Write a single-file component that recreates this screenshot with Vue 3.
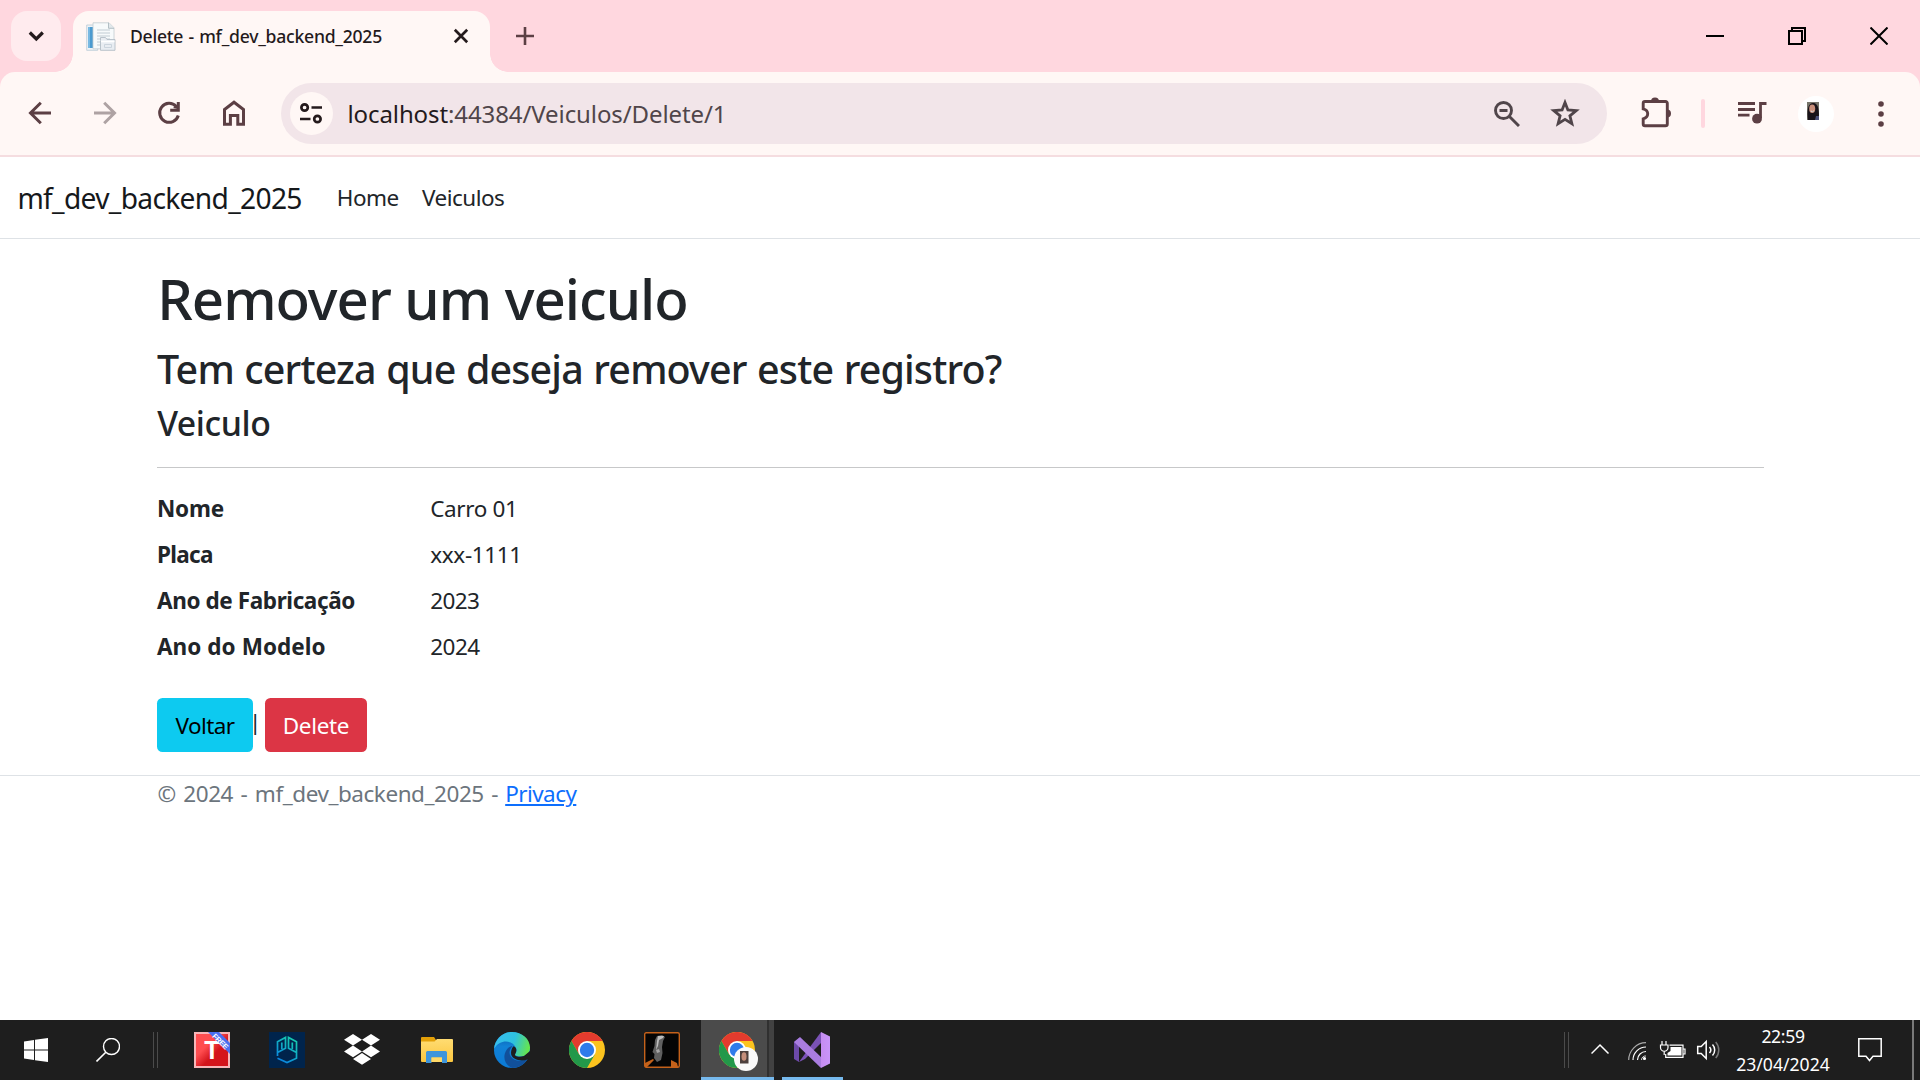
<script setup>
const rows = [
  { label: 'Nome', value: 'Carro 01', ls: -0.2, vs: -0.35 },
  { label: 'Placa', value: 'xxx-1111', ls: -0.7, vs: -0.34 },
  { label: 'Ano de Fabricação', value: '2023', ls: -0.4, vs: -0.6 },
  { label: 'Ano do Modelo', value: '2024', ls: 0.06, vs: -0.5 },
]
</script>

<template>
  <div class="screen">
    <header class="tabstrip">
      <button class="tab-search">
        <svg width="50" height="50" viewBox="11 11 50 50"><path d="M29.8 32.5l6.5 6.5 6.5-6.5" fill="none" stroke="#241a1c" stroke-width="3.2" /></svg>
      </button>
      <div class="tab">
        <svg class="favicon" width="30" height="30" viewBox="0 0 30 30">
          <path d="M.7 3h11v25.300h-11z" fill="#eef3f7" stroke="#b9c9d4" stroke-width=".8" />
          <path d="M2 5h5v21H2z" fill="#4b9bd0" /><path d="M2 5h2v21H2z" fill="#78b9e2" />
          <path d="M7 .8h16l5 5v21H7z" fill="#f7fafb" stroke="#c2cbd0" stroke-width=".8" />
          <path d="M22.500 .8v5.500H28" fill="#e2e8eb" stroke="#a5b2b9" stroke-width=".8" />
          <path d="M11 8h13M11 11h13M11 14h13M11 17h13M11 20h8M11 23h8" stroke="#d4dce1" stroke-width="1.400" />
          <path d="M14.500 18.500v-3h5l1.500 2h8v10.800H14.500z" fill="#e9edf2" stroke="#b3bdc6" stroke-width=".9" />
          <path d="M15 19.500h13.500" stroke="#fff" stroke-width="1.600" /><path d="M18.500 22.500h7v3h-7z" fill="none" stroke="#cbd4dd" />
        </svg>
        <span class="tab-title">Delete - mf_dev_backend_2025</span>
        <svg class="tab-close" width="16" height="16" viewBox="0 0 16 16"><path d="M1.800 1.800l12.400 12.400M14.200 1.800L1.800 14.200" stroke="#241a1c" stroke-width="2.700" /></svg>
      </div>
      <svg class="plus" width="18" height="18" viewBox="0 0 18 18"><path d="M9 0v18M0 9h18" stroke="#5c3f44" stroke-width="2.600" /></svg>
      <div class="win-buttons">
        <svg width="18" height="18" viewBox="0 0 18 18"><path d="M0 9h18" stroke="#000" stroke-width="2" /></svg>
        <svg width="18" height="18" viewBox="0 0 18 18"><path d="M1 4h13v13H1zM4 4V1h13v13h-3" fill="none" stroke="#000" stroke-width="2" /></svg>
        <svg width="18" height="18" viewBox="0 0 18 18"><path d="M.5 .5l17 17M17.500 .5l-17 17" stroke="#000" stroke-width="2" /></svg>
      </div>
    </header>

    <div class="toolbar-wrap">
      <div class="toolbar">
        <div class="nav-icons">
          <svg width="24" height="24" viewBox="0 0 24 24"><path d="M23 12H3M12.800 1.700L2.500 12l10.300 10.300" /></svg>
          <svg class="dim" width="24" height="24" viewBox="0 0 24 24"><path d="M1 12h20M11.200 1.700L21.500 12 11.200 22.300" /></svg>
          <svg width="24" height="24" viewBox="0 0 24 24"><path d="M19.200 5.400A9.500 9.500 0 1 0 21.300 14.500M21.300 1v8.300H13.200" /><path d="M16 7l5-4v5z" fill="#5c3f44" stroke="none" /></svg>
          <svg width="24" height="28" viewBox="0 0 24 28"><path d="M2.500 25.300V10.500L12 3.200l9.500 7.300v14.800h-5.700V16.500H8.400v8.800z" /></svg>
        </div>
        <div class="omnibox">
          <span class="site-info">
            <svg width="22" height="22" viewBox="0 0 22 22"><path d="M11.500 5.500H22M0 17h10.500" /><circle cx="4.600" cy="5.500" r="3.200" /><circle cx="17.400" cy="17" r="3.200" /></svg>
          </span>
          <span class="url"><b>localhost</b>:44384/Veiculos/Delete/1</span>
          <svg class="zoom-out" width="26" height="26" viewBox="0 0 26 26"><circle cx="9.500" cy="9.500" r="8" /><path d="M15.200 15.200L25 25M5.500 9.500h8" /></svg>
          <svg class="star" width="30" height="28" viewBox="0 0 30 28"><path d="M15 3.500l2.900 7.500 8.300.6-6.300 5.200 2 7.900-6.900-4.300-6.900 4.300 2-7.900-6.300-5.200 8.300-.6z" /></svg>
        </div>
        <svg class="ext" width="30" height="32" viewBox="0 0 30 32">
          <path d="M4 5.500h20.500a1.800 1.800 0 0 1 1.800 1.800V28a1.800 1.800 0 0 1-1.800 1.800H4A1.800 1.800 0 0 1 2.200 28v-5.200c3-.8 4.500-2.600 4.500-5s-1.500-4.200-4.500-5V7.300A1.800 1.800 0 0 1 4 5.500z" fill="none" stroke="#5c3f44" stroke-width="2.900" />
          <path d="M10 5.500a4 4 0 0 1 8 0zM26 13.500a4 4 0 0 1 0 8z" fill="#5c3f44" />
        </svg>
        <i class="divider"></i>
        <svg class="media" width="29" height="22" viewBox="0 0 29 22"><path d="M0 1.500h17M0 7.500h17M0 13.200h11.500M22.500 16V1.500H28.500" fill="none" stroke="#5c3f44" stroke-width="2.800" /><circle cx="19" cy="16.700" r="4.900" fill="#5c3f44" /></svg>
        <span class="avatar">
          <svg width="12" height="18" viewBox="0 0 12 18"><path d="M0 0h12v18H0z" fill="#77746a" /><path d="M1 18C0 11 0 1 6 1S12 9 12 18z" fill="#191319" /><ellipse cx="5.200" cy="6.800" rx="3" ry="4.300" fill="#c98f7b" /><path d="M3.800 9q1.500 1.300 3 0" stroke="#fff" stroke-width=".9" /><path d="M9 14h3v4H8z" fill="#4c5079" /></svg>
        </span>
        <svg class="dots" width="6" height="28" viewBox="0 0 6 28"><circle cx="3" cy="4" r="2.800" /><circle cx="3" cy="14" r="2.800" /><circle cx="3" cy="24" r="2.800" /></svg>
      </div>
    </div>

    <div class="page">
      <nav class="navbar">
        <a class="brand">mf_dev_backend_2025</a>
        <a class="home">Home</a>
        <a class="veic">Veiculos</a>
      </nav>
      <main>
        <h1>Remover um veiculo</h1>
        <h3>Tem certeza que deseja remover este registro?</h3>
        <h4>Veiculo</h4>
        <hr />
        <dl>
          <div v-for="r in rows" :key="r.label" class="row">
            <dt :style="{ letterSpacing: r.ls + 'px' }">{{ r.label }}</dt>
            <dd :style="{ letterSpacing: r.vs + 'px' }">{{ r.value }}</dd>
          </div>
        </dl>
        <div class="actions">
          <a class="btn info">Voltar</a><span class="pipe">|</span><button class="btn danger">Delete</button>
        </div>
      </main>
      <footer><span>© 2024 - mf_dev_backend_2025 -</span><a>Privacy</a></footer>
    </div>

    <div class="taskbar">
      <svg class="start" width="24" height="24" viewBox="0 0 24 24"><path d="M0 3.400L10 2v9.400H0zM11 1.800L24 0v11.400H11zM0 12.500h10V22L0 20.600zM11 12.500h13V24l-13-1.800z" fill="#fff" /></svg>
      <svg class="search" width="24" height="24" viewBox="0 0 24 24"><circle cx="15.500" cy="8.500" r="8" fill="none" stroke="#fff" stroke-width="1.400" /><path d="M9.800 14.200L.5 23.500" stroke="#fff" stroke-width="1.600" /></svg>
      <i class="grip g1"></i>
      <div class="apps">
        <div class="app">
          <svg width="36" height="36" viewBox="0 0 36 36">
            <defs><linearGradient id="tr" x2="1" y2="1"><stop offset=".35" stop-color="#ff4d50" /><stop offset=".6" stop-color="#d4141b" /></linearGradient><clipPath id="tc"><path d="M0 0h36v36H0z" /></clipPath></defs>
            <g clip-path="url(#tc)"><path d="M0 0h36v36H0z" fill="#f7b6b8" /><path d="M2 2h32v32H2z" fill="url(#tr)" />
              <text x="18" y="27" text-anchor="middle" font-family="Liberation Sans, sans-serif" font-weight="700" font-size="25" fill="#fff">T</text>
              <path d="M14 0h11l11 11v11z" fill="#4a6ff0" />
              <text transform="translate(18.500 4) rotate(45)" font-family="Liberation Sans, sans-serif" font-weight="700" font-size="7.500" fill="#fff" textLength="19" y="1">FREE</text></g>
          </svg>
        </div>
        <div class="app">
          <svg width="36" height="36" viewBox="0 0 36 36">
            <defs><linearGradient id="pg" x1="0" y1="1" x2=".6" y2="0"><stop offset="0" stop-color="#087be8" /><stop offset="1" stop-color="#16c8b0" /></linearGradient></defs>
            <path d="M0 0h36v36H0z" fill="#00244c" />
            <path d="M8.500 24V9.800L16.500 5.500V16.300L8.500 20.500M12.800 10.500v6.500M23.300 10.500v6.500M27.500 20.500L19.500 16.300V5.500l8 4.300v16.500L18 30.600l-9.500-4.300" fill="none" stroke="url(#pg)" stroke-width="1.700" />
          </svg>
        </div>
        <div class="app">
          <svg width="36" height="36" viewBox="0 0 36 36"><path d="M9 2l9 5.800-9 5.800-9-5.800zM27 2l9 5.800-9 5.800-9-5.800zM9 13.600l9 5.800-9 5.800-9-5.800zM27 13.600l9 5.800-9 5.800-9-5.800zM18 21l9 5.900-9 5.900-9-5.900z" fill="#fff" /></svg>
        </div>
        <div class="app">
          <svg width="36" height="36" viewBox="0 0 36 36">
            <defs><linearGradient id="fd" x2="0" y2="1"><stop offset="0" stop-color="#ffdc72" /><stop offset="1" stop-color="#fbc63f" /></linearGradient></defs>
            <path d="M2 6a1 1 0 0 1 1-1h12l2 3v6H2z" fill="#e3a008" /><path d="M2 9.500h13.500l2.500-2.500h15a1 1 0 0 1 1 1v21a1 1 0 0 1-1 1H3a1 1 0 0 1-1-1z" fill="url(#fd)" />
            <path d="M7 31V20.500a1.500 1.500 0 0 1 1.500-1.500h18a1.500 1.500 0 0 1 1.500 1.500V31h-5v-5.500H12.500V31z" fill="#3e95dc" /><path d="M12.500 25.500h10.500v4.500H12.500z" fill="#ffd867" />
          </svg>
        </div>
        <div class="app">
          <svg width="36" height="36" viewBox="0 0 36 36">
            <defs><linearGradient id="e1" x1="0" y1=".3" x2="1" y2=".5"><stop offset="0" stop-color="#38bdee" /><stop offset=".55" stop-color="#2ec2df" /><stop offset="1" stop-color="#66e64c" /></linearGradient><linearGradient id="e2" x2="0" y2="1"><stop offset="0" stop-color="#0c59a4" /><stop offset=".4" stop-color="#1181d6" /><stop offset="1" stop-color="#0b7ad6" /></linearGradient></defs>
            <circle cx="18" cy="18" r="18" fill="url(#e2)" />
            <path d="M33.500 27C30 33 24 36 18 36c-7-3-10-11-5.500-18 1.500-2.500 4-3.800 6-4-3 3.500-4 7-1.800 10.500 3 4.500 10 5.500 16.800 2.500z" fill="#11509b" />
            <path d="M0 17C1 7 9 0 18 0c10 0 18 7 18 15.500 0 5.500-4 9-9.500 9-4.500 0-6-1.300-5.300-2.500 1.500-2 1.800-4 .8-6C19 8 6 6.500 0 17z" fill="url(#e1)" />
            <path d="M21.200 22C19.800 24.500 25 25.500 30 24l6-5v6l-2.500 2.500c-7 2.500-15 0-16.300-5-.5-3 .2-6 2.300-8.300 3.500 1 3.500 5 1.700 7.800z" fill="#1e1e1e" />
          </svg>
        </div>
        <div class="app">
          <svg width="36" height="36" viewBox="0 0 36 36"><circle cx="18" cy="18" r="18" fill="#fcc31e" /><path d="M2.400 9A18 18 0 0 1 33.600 9H18l-7.800 13.500z" fill="#e33b2e" /><path d="M2.400 9A18 18 0 0 0 18 36l7.800-13.500L18 27l-7.800-4.500z" fill="#22984a" /><circle cx="18" cy="18" r="9" fill="#fff" /><circle cx="18" cy="18" r="7.200" fill="#2f7bea" /></svg>
        </div>
        <div class="app">
          <svg width="36" height="36" viewBox="0 0 36 36"><rect x=".7" y=".7" width="34.600" height="34.600" rx="1.500" fill="#050505" stroke="#c4611a" stroke-width="1.400" /><path d="M13 4l5-1 3 2-2 4-1 6 .5 6-1.500 7-4 2-3-4 .5-4-2-2 2-6 .5-6z" fill="#606060" /><path d="M14 4l6 0-1 2-4 2-1 6-2 4 1-9z" fill="#bdbdbd" /><path d="M12 18l3-1 1 3-3 1z" fill="#a5a5a5" /><path d="M1 35v-4l8-4 1 1-7 7zM27 28l6 3 1 4h-7z" fill="#c4611a" /></svg>
        </div>
        <div class="app active">
          <svg width="40" height="40" viewBox="0 0 40 40"><circle cx="18" cy="18" r="18" fill="#fcc31e" /><path d="M2.400 9A18 18 0 0 1 33.600 9H18l-7.800 13.500z" fill="#e33b2e" /><path d="M2.400 9A18 18 0 0 0 18 36l7.800-13.500L18 27l-7.800-4.500z" fill="#22984a" /><circle cx="18" cy="18" r="9" fill="#fff" /><circle cx="18" cy="18" r="7.200" fill="#2f7bea" /><circle cx="27" cy="27" r="12" fill="#fafafa" /><path d="M21 19h8.500v12.500H21z" fill="#4d403d" /><ellipse cx="25" cy="24.500" rx="2.500" ry="4.300" fill="#c58e7a" /></svg>
          <i></i>
        </div>
        <div class="app vs">
          <svg width="36" height="36" viewBox="0 0 36 36">
            <defs><linearGradient id="vs" x2="1"><stop offset="0" stop-color="#c58cf0" /><stop offset="1" stop-color="#c995fa" /></linearGradient></defs>
            <path d="M0 10l5-4v24l-5-3z" fill="#6d4aa8" /><path d="M5 30L27 0v11L11 27z" fill="#7a52b6" /><path d="M0 10l6-5 21 20v11z" fill="#a97de0" /><path d="M27 0l9 4.500v27L27 36z" fill="url(#vs)" />
          </svg>
          <i></i>
        </div>
      </div>
      <i class="grip g2"></i>
      <svg class="tray" width="132" height="24" viewBox="0 0 132 24" fill="none" stroke="#fff" stroke-width="1.500">
        <path d="M.5 15.500l8.500-8.500 8.500 8.500" />
        <g stroke-width="1.200"><path d="M37.700 22A17.500 17.500 0 0 1 55 4.700" stroke="#aaa" /><path d="M42 22A13 13 0 0 1 55 9M46.500 22A8.500 8.500 0 0 1 55 13.500" /><circle cx="53.500" cy="20.500" r="1" fill="#fff" /><path d="M50.500 22a4 4 0 0 1 4.500-4" stroke-width=".8" /></g>
        <path d="M78.500 7.200H92V19.300H74.700V16M92.500 11h1.500v5h-1.500" stroke-width="1.200" /><path d="M79.500 9h11v8.500h-14V15l3-2z" fill="#fff" stroke="none" /><path d="M71 3v4M75 3v4M69.500 7h7.500v2.500a3.700 3.700 0 0 1-7.500 0zM73.200 13.500V17" stroke-width="1.200" />
        <path d="M106.700 8.500h3.500l5-5v17l-5-5h-3.500z" /><path d="M118.500 9a4.500 4.500 0 0 1 0 6M121.500 6.500a8 8 0 0 1 0 11" /><path d="M124.700 4a12 12 0 0 1 0 16" stroke="#777" />
      </svg>
      <div class="clock"><span>22:59</span><span class="date">23/04/2024</span></div>
      <svg class="notif" width="24" height="24" viewBox="0 0 24 24"><path d="M.8 .8h22.400v17.400H15L11.500 22.500 8 18.200H.8z" fill="none" stroke="#fff" stroke-width="1.500" /></svg>
      <i class="edge"></i>
    </div>
  </div>
</template>

<style>
body { margin: 0; }
</style>

<style scoped>
.screen { width: 1920px; height: 1080px; display: flex; flex-direction: column; overflow: hidden; background: #fff; font-family: "Noto Sans", "Open Sans", sans-serif; }
.screen * { box-sizing: border-box; }
svg { display: block; flex: none; }
button { border: 0; padding: 0; font: inherit; }
a { text-decoration: none; }

.tabstrip { height: 72px; flex: none; background: #ffd7df; display: flex; padding-left: 11px; }
.tab-search { width: 50px; height: 50px; margin-top: 11px; border-radius: 16px; background: #ffebee; overflow: hidden; flex: none; }
.tab { position: relative; width: 417px; height: 61px; margin: 11px 0 0 12px; border-radius: 16px 16px 0 0; background: #fff7f5; display: flex; flex: none; }
.tab::before, .tab::after { content: ""; position: absolute; bottom: 0; width: 18px; height: 18px; }
.tab::before { left: -18px; background: radial-gradient(circle at 0 0, transparent 17.5px, #fff7f5 18px); }
.tab::after { right: -18px; background: radial-gradient(circle at 100% 0, transparent 17.5px, #fff7f5 18px); }
.favicon { margin: 11px 0 0 13px; }
.tab-title { width: 323px; margin: 11px 0 0 14px; line-height: 28px; font-size: 17.6px; font-weight: 500; letter-spacing: -0.25px; word-spacing: 1px; color: #241a1c; white-space: nowrap; }
.tab-close { margin-top: 17px; }
.plus { margin: 27px 0 0 26px; }
.win-buttons { display: flex; gap: 64px; margin: 27px 32px 0 auto; }

.toolbar-wrap { height: 85px; flex: none; background: #ffd7df; }
.toolbar { height: 85px; background: #fff7f5; border-radius: 15px 15px 0 0; border-bottom: 2px solid #f5dde0; display: flex; align-items: center; }
.nav-icons { display: flex; align-items: center; gap: 40.7px; margin: -1px 0 0 28px; width: 253px; }
.nav-icons svg { fill: none; stroke: #5c3f44; stroke-width: 3; }
.nav-icons .dim { stroke: #aea2a3; }
.omnibox { width: 1326px; height: 61px; border-radius: 31px; background: #f2e5e9; display: flex; align-items: center; flex: none; }
.site-info { width: 43px; height: 43px; margin-left: 9px; border-radius: 50%; background: #fff7f5; display: flex; align-items: center; justify-content: center; flex: none; }
.site-info svg { fill: none; stroke: #241a1c; stroke-width: 2.7; margin: -1px 1px 0 0; }
.url { margin-left: 14.5px; width: 1146.5px; font-size: 24px; line-height: 36px; letter-spacing: -0.1px; color: #50454a; white-space: nowrap; }
.url b { font-weight: 400; color: #241a1c; }
.zoom-out, .star { fill: none; stroke: #50454a; stroke-width: 2.9; }
.star { margin-left: 29.5px; margin-top: -1px; stroke-width: 2.8; }
.ext { margin: -3px 0 0 34px; }
.divider { width: 4px; height: 29px; border-radius: 2px; background: #ffd7df; margin-left: 30px; }
.media { margin: -2px 0 0 33px; }
.avatar { width: 36px; height: 36px; border-radius: 50%; background: #fff; margin-left: 31px; padding: 6px 0 0 9px; }
.dots { margin-left: 44px; fill: #5c3f44; }

.page { height: 863px; flex: none; font-size: 22.5px; line-height: 34.5px; color: #212529; }
.navbar { height: 82px; border-bottom: 1px solid #dee2e6; display: flex; align-items: center; padding: 2px 0 0 17.4px; white-space: nowrap; }
.brand { width: 319.4px; font-size: 28.2px; letter-spacing: -0.69px; color: #15181b; }
.home { width: 85.3px; letter-spacing: -0.53px; }
.veic { letter-spacing: -0.53px; }
main { margin: 24.5px 0 0 156.7px; width: 1607.3px; }
h1, h3, h4 { margin: 0; font-weight: 500; white-space: nowrap; }
h1 { font-size: 56.4px; line-height: 69px; letter-spacing: -1.02px; text-indent: .5px; }
h3 { font-size: 39.4px; line-height: 48px; letter-spacing: -0.84px; word-spacing: 1.1px; margin-top: 12px; text-indent: .4px; }
h4 { font-size: 33.8px; line-height: 41.4px; letter-spacing: -0.43px; margin-top: 10.6px; text-indent: .5px; }
hr { height: 1px; border: 0; margin: 22.1px 0 24.4px; background: #c7c8c9; }
dl { margin: 0; }
.row { display: flex; height: 46px; white-space: nowrap; }
dt { width: 273.5px; font-weight: 700; text-indent: .3px; }
dd { margin: 0; }
.actions { display: flex; margin-top: 22.3px; height: 54px; }
.btn { height: 54px; line-height: 55px; border-radius: 5.5px; text-align: center; }
.info { width: 96px; background: #0dcaf0; color: #000; letter-spacing: -0.6px; text-indent: .6px; }
.pipe { width: 12px; text-align: left; text-indent: -3.8px; line-height: 47px; }
.danger { width: 102px; background: #dc3545; color: #fff; letter-spacing: -0.3px; text-indent: .5px; }
footer { margin-top: 23px; border-top: 1px solid #dee2e6; padding: 1px 0 0 157.6px; color: #6c757d; display: flex; white-space: nowrap; }
footer span { width: 347.6px; letter-spacing: -0.45px; word-spacing: 2.1px; }
footer a { color: #0d6efd; text-decoration: underline; text-decoration-thickness: 2px; text-underline-offset: 2px; letter-spacing: -0.56px; }

.taskbar { height: 60px; flex: none; background: #1e1e1e; display: flex; align-items: center; }
.start { margin-left: 24px; }
.search { margin-left: 48px; }
.grip { width: 5px; height: 36px; border: solid #4b4b4b; border-width: 0 1px; flex: none; }
.g1 { margin-left: 33px; }
.apps { display: flex; height: 60px; margin-left: 16px; }
.app { position: relative; width: 75px; height: 60px; padding: 12px 0 0 20px; }
.app > i { position: absolute; left: 8px; bottom: 0; width: 61px; height: 3px; background: #76b9ed; }
.active { background: linear-gradient(90deg, transparent 2px, #4b4b4b 2px, #4b4b4b 68px, #303030 68px, #303030 70px, #414141 70px); }
.active > i { left: 2px; width: 73px; }
.g2 { margin-left: 715px; }
.tray { margin-left: 22px; }
.clock { width: 120px; margin-left: 0; display: flex; flex-direction: column; align-items: center; font-size: 17.6px; line-height: 28.5px; color: #fff; letter-spacing: -0.35px; }
.clock .date { letter-spacing: 0; }
.notif { margin-left: 15px; }
.edge { width: 2px; height: 60px; background: #7a7a7a; margin-left: 30px; }
</style>
